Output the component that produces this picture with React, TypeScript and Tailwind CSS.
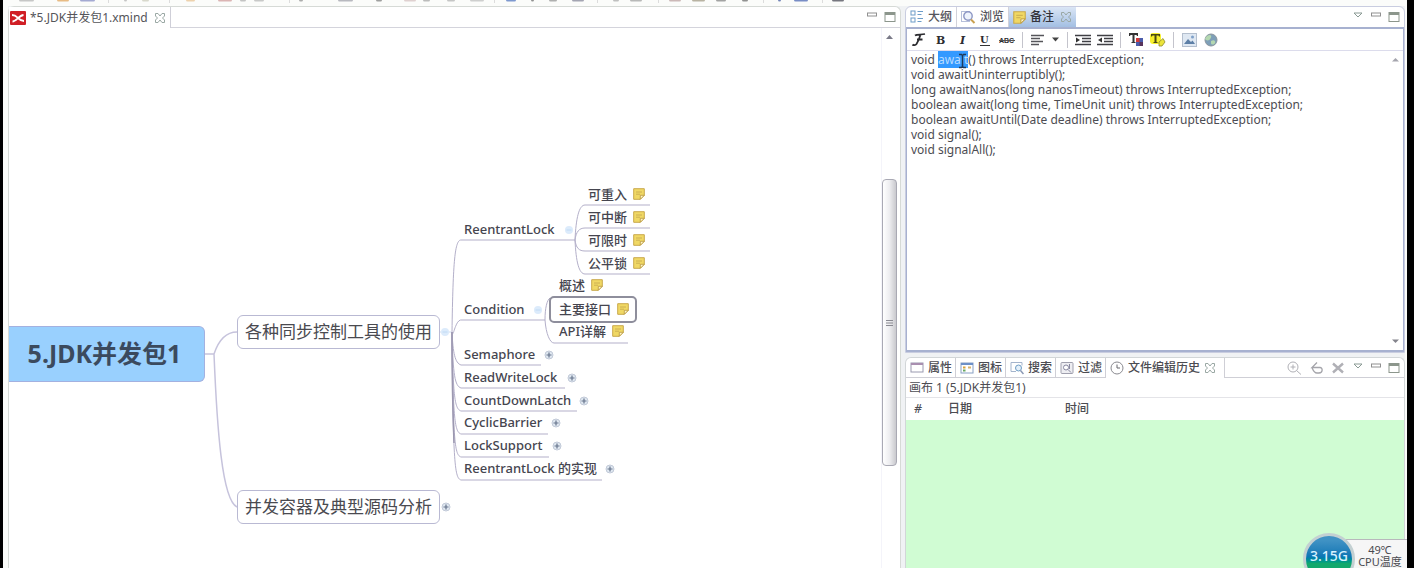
import React, { useEffect, useRef } from "react";

const FONT = "font-['Noto_Sans','Noto_Sans_CJK_SC',sans-serif]";

function NoteIcon({ size = 12 }: { size?: number }) {
  return (
    <svg width={size} height={size} viewBox="0 0 12 12" className="shrink-0" aria-hidden="true">
      <path d="M.7.7h10.6v6.6l-4 4H.7z" fill="#f0d864" stroke="#c9a94c" strokeWidth="1" />
      <path d="M11.3 7.3h-4v4z" fill="#fff6c8" stroke="#b8963c" strokeWidth=".8" />
      <path d="M3 4h6M3 6.2h4" stroke="#c8ac50" strokeWidth=".9" />
    </svg>
  );
}

function CloseIcon() {
  return (
    <svg width="12" height="12" viewBox="0 0 12 12" aria-hidden="true" fill="none" stroke="#9aa8a4">
      <path d="M1.5 1.5H4l2 2.5 2-2.5h2.5V4l-2 2 2 2v2.5H8L6 8l-2 2.5H1.500V8l2-2-2-2z" />
    </svg>
  );
}

function MinIcon() {
  return (
    <svg width="12" height="12" viewBox="0 0 12 12" aria-hidden="true">
      <rect x="1.5" y="2" width="9" height="3" fill="#fff" stroke="#909090" />
    </svg>
  );
}

function MaxIcon() {
  return (
    <svg width="12" height="12" viewBox="0 0 12 12" aria-hidden="true">
      <rect x="1" y="1.5" width="10" height="9" fill="#fff" stroke="#8c968c" />
      <path d="M1 3h10" stroke="#8c968c" strokeWidth="2" />
    </svg>
  );
}

function MenuIcon() {
  return (
    <svg width="12" height="12" viewBox="0 0 12 12" aria-hidden="true">
      <path d="M2 2h8L6 6z" fill="#fff" stroke="#8a9a94" />
    </svg>
  );
}

function WindowButtons({ menu = false }: { menu?: boolean }) {
  return (
    <div className="flex items-center gap-1.5 pr-1">
      {menu && (
        <button type="button" aria-label="视图菜单">
          <MenuIcon />
        </button>
      )}
      <button type="button" aria-label="最小化">
        <MinIcon />
      </button>
      <button type="button" aria-label="最大化">
        <MaxIcon />
      </button>
    </div>
  );
}

const stripMarks: [number, number, string][] = [
  [11, 15, "#b9b9b9"], [49, 12, "#e3ab68"], [72, 15, "#8f95c8"], [116, 3, "#b8b8b8"], [134, 7, "#d0d0c0"],
  [178, 9, "#eac79a"], [210, 14, "#d3a3a3"], [232, 6, "#b5b5b5"], [246, 10, "#bcbcbc"], [291, 4, "#999999"],
  [330, 15, "#a8a8b0"], [368, 6, "#888888"], [396, 12, "#d8c6c6"], [415, 7, "#ababab"], [439, 8, "#b8b8b8"],
  [462, 14, "#c3c3c3"], [498, 10, "#5f7fc4"], [523, 3, "#777777"], [541, 8, "#9c9c9c"], [564, 12, "#8f8fa0"],
  [605, 6, "#b0b0b0"], [622, 12, "#a8a8a8"], [661, 12, "#c0a8a8"], [684, 13, "#a8a08c"], [708, 10, "#8c8c8c"],
  [734, 6, "#777777"], [770, 3, "#5468a8"], [786, 14, "#5870b8"], [824, 12, "#555560"],
];
const stripSeparators = [100, 161, 281, 486, 589, 650, 755, 814];

function ToolbarStrip() {
  return (
    <svg className="block h-1.5 w-full" aria-hidden="true">
      {stripMarks.map(([x, w, c]) => (
        <rect key={x} x={x} y="-3" width={w} height="4.500" rx="1.5" fill={c} opacity=".8" />
      ))}
      {stripSeparators.map((x) => (
        <rect key={x} x={x} y="0" width="1" height="3" fill="#dcdcdc" />
      ))}
    </svg>
  );
}

type Topic = { x: number; y: number; text: string };

const branches: { y: number; base: number; end: number; text: string; toggle: number; open?: boolean }[] = [
  { y: 202, base: 212, end: 566, text: "ReentrantLock", toggle: 560, open: true },
  { y: 282, base: 292, end: 536, text: "Condition", toggle: 529, open: true },
  { y: 327, base: 337, end: 532, text: "Semaphore", toggle: 540 },
  { y: 350, base: 360, end: 556, text: "ReadWriteLock", toggle: 563 },
  { y: 373, base: 383, end: 568, text: "CountDownLatch", toggle: 575 },
  { y: 395, base: 406, end: 539, text: "CyclicBarrier", toggle: 547 },
  { y: 418, base: 429, end: 540, text: "LockSupport", toggle: 548 },
  { y: 441, base: 452, end: 593, text: "ReentrantLock 的实现", toggle: 601 },
];

const leaves: Topic[] = [
  { x: 579, y: 166, text: "可重入" },
  { x: 579, y: 189, text: "可中断" },
  { x: 579, y: 212, text: "可限时" },
  { x: 579, y: 235, text: "公平锁" },
  { x: 550, y: 257, text: "概述" },
  { x: 550, y: 303, text: "API详解" },
];

function Toggle({ x, y, open }: { x: number; y: number; open?: boolean }) {
  if (open) {
    return (
      <g stroke="none">
        <circle cx={x} cy={y} r="4" fill="#dcebfb" />
        <path d={`M${x - 2.5} ${y}h5`} stroke="#c0daf4" />
      </g>
    );
  }
  return (
    <g>
      <circle cx={x} cy={y} r="4" fill="#dfe7f0" stroke="#c2cad8" />
      <path d={`M${x - 2.5} ${y}h5M${x} ${y - 2.5}v5`} stroke="#66748c" strokeWidth="1.2" />
    </g>
  );
}

function MindMap() {
  return (
    <div className="relative min-w-0 flex-1 overflow-hidden">
      <svg className="absolute inset-0 h-full w-full" aria-hidden="true" fill="none" stroke="#b3afc9">
        <path d="M196 326h9C209 314 216 304 228 304M205 326C208 400 213 472 228 479" stroke="#c6c3dc" strokeWidth="1.5" />
        <path d="M430 304h12" stroke="#cfdcf0" />
        {branches.map((b) => (
          <path
            key={b.text}
            d={
              b.base < 304
                ? `M443 304C444 ${b.base + 20} 446 ${b.base} 452 ${b.base}H${b.end}`
                : `M443 304C444 ${b.base - 12} 446 ${b.base - 2} 452 ${b.base}H${b.end}`
            }
          />
        ))}
        <path d="M443 304C443 350 444 390 445 415" stroke="#9c98b0" strokeWidth="1.5" />
        <path d="M566 212C567 190 570 177 576 177H641" />
        <path d="M566 212C567 204 570 200 576 200H641" />
        <path d="M566 212C567 220 570 223 576 223H641" />
        <path d="M566 212C567 234 570 246 576 246H641" />
        <path d="M536 292C536 280 538 272 541 270M536 292C537 306 541 315 545 315H619" />
        {branches.map((b) => (
          <Toggle key={b.text} x={b.toggle} y={b.y} open={b.open} />
        ))}
        <Toggle x={436} y={304} open />
        <Toggle x={437} y={479} />
      </svg>

      <div className="absolute left-0 top-[298px] flex h-14 w-[196px] items-center justify-center rounded-r-md border border-l-0 border-[#a3b1e0] bg-[#99d0fe] pr-1 pb-0.5 text-[25px] leading-8 font-bold whitespace-nowrap text-[#3b4a5e]">
        5.JDK并发包1
      </div>
      <div className="absolute left-[228px] top-[287px] flex h-[34px] items-center whitespace-nowrap rounded-md border border-[#b9b9d3] bg-white px-[7px] text-[17px] text-[#4a4a50]">
        各种同步控制工具的使用
      </div>
      <div className="absolute left-[228px] top-[462px] flex h-[34px] items-center whitespace-nowrap rounded-md border border-[#b9b9d3] bg-white px-[7px] text-[17px] text-[#4a4a50]">
        并发容器及典型源码分析
      </div>

      {branches.map((b) => (
        <div
          key={b.text}
          className="absolute -translate-y-1/2 whitespace-nowrap pb-0.5 text-[13px] leading-4 font-medium text-[#45454f]"
          style={{ left: 455, top: b.y }}
        >
          {b.text}
        </div>
      ))}
      {leaves.map((t) => (
        <div
          key={t.text}
          className="absolute flex -translate-y-1/2 items-center gap-1.5 whitespace-nowrap text-[13px] leading-4 font-medium text-[#45454f]"
          style={{ left: t.x, top: t.y }}
        >
          {t.text}
          <NoteIcon />
        </div>
      ))}
      <div className="absolute left-[540px] top-[268px] flex h-[27px] items-center gap-1.5 whitespace-nowrap rounded-[5px] border-2 border-[#8e8e9c] bg-white pr-1.5 pb-0.5 pl-2 text-[13px] leading-4 font-medium text-[#45454f]">
        主要接口
        <NoteIcon />
      </div>
    </div>
  );
}

function Editor() {
  return (
    <section className="flex min-h-0 min-w-0 flex-col rounded-t-md border border-b-0 border-[#d6dad6] bg-white">
      <div className="flex h-[21px] shrink-0 items-stretch justify-between border-b border-[#d4d4dc]">
        <div className="-mb-px flex items-center gap-1 border-r border-[#cfcfd8] bg-white pr-1 pl-px">
          <svg width="16" height="14" viewBox="0 0 16 14" aria-hidden="true">
            <rect width="16" height="14" rx="1" fill="#d01f26" />
            <path d="M2 4c3.500 0 4 1 6 3s3 3 6 3M2.500 10.500C6 10.500 9 4.500 13.500 4" stroke="#fff" strokeWidth="1.8" fill="none" />
          </svg>
          <span className="text-[12px] leading-4 whitespace-nowrap text-[#55555a]">*5.JDK并发包1.xmind</span>
          <button type="button" aria-label="关闭" className="ml-0.5">
            <CloseIcon />
          </button>
        </div>
        <WindowButtons />
      </div>
      <div className="flex min-h-0 flex-1">
        <MindMap />
        <div className="flex w-[19px] shrink-0 flex-col items-center border-l border-[#f4f4fa] pr-1">
          <svg width="7" height="5" viewBox="0 0 7 5" className="mt-1.5 mb-[140px] shrink-0" aria-hidden="true">
            <path d="M0 5h7L3.500 1z" fill="#7a7a88" />
          </svg>
          <div className="flex h-[287px] w-[15px] shrink-0 items-center justify-center rounded-sm border border-[#a9a9b4] bg-linear-to-r from-white via-[#ededf0] to-[#c9c9ce]">
            <svg width="7" height="8" viewBox="0 0 7 8" aria-hidden="true">
              <path d="M0 1.500h7M0 4h7M0 6.500h7" stroke="#8a8a92" />
            </svg>
          </div>
        </div>
      </div>
    </section>
  );
}

function OutlineIcon() {
  return (
    <svg width="14" height="14" viewBox="0 0 14 14" fill="none" stroke="#6c9cc8" aria-hidden="true">
      <rect x="1" y="1" width="4" height="4" />
      <rect x="1" y="8" width="4" height="4" />
      <path d="M7.500 1.500h5.500M7.500 4.500h4M7.500 8.500h5.500M7.500 11.500h4" />
    </svg>
  );
}

function LensIcon() {
  return (
    <svg width="15" height="14" viewBox="0 0 15 14" fill="none" aria-hidden="true">
      <rect x=".5" y="1.5" width="8" height="10" stroke="#b6bfda" />
      <circle cx="7" cy="6" r="4.2" fill="#eef3fc" stroke="#8d97c4" strokeWidth="1.4" />
      <path d="M10 9.500l3.500 3.500" stroke="#c9a050" strokeWidth="2" />
    </svg>
  );
}

const topTab =
  "flex items-center gap-1 border-r border-[#d2d2da] px-1 text-[12px] leading-4 font-medium text-[#55555c] whitespace-nowrap";

const tools: { label: string; icon: React.ReactNode }[] = [
  {
    label: "字体",
    icon: (
      <path
        d="M4 3.500C6 2 10 3 14 2M9.500 2.800C8.500 6 7.500 9 5.500 12c-1 1.300-3 1.500-4 .5M6 7.500h5.500"
        fill="none"
        stroke="#2c2c30"
        strokeWidth="1.8"
      />
    ),
  },
  { label: "粗体", icon: <text x="3" y="12" fontFamily="DejaVu Serif, serif" fontWeight="700" fontSize="11">B</text> },
  { label: "斜体", icon: <text x="5" y="12" fontFamily="DejaVu Serif, serif" fontStyle="italic" fontWeight="700" fontSize="11">I</text> },
  {
    label: "下划线",
    icon: (
      <>
        <text x="3" y="11" fontFamily="DejaVu Serif, serif" fontWeight="700" fontSize="10">U</text>
        <path d="M3 13.500h10" stroke="#333" />
      </>
    ),
  },
  {
    label: "删除线",
    icon: (
      <>
        <text x="0" y="11" fontFamily="Liberation Sans, sans-serif" fontWeight="700" fontSize="7">ABC</text>
        <path d="M0 8.500h16" stroke="#555" />
      </>
    ),
  },
];

function NotesToolbar() {
  const sep = <span className="mx-1 h-4 w-px bg-[#c4c4cc]" />;
  const btn = "flex h-5 w-[22px] items-center justify-center";
  return (
    <div role="toolbar" aria-label="备注格式" className="flex h-[22px] shrink-0 items-center border-b border-[#dcdcec] pl-px">
      {tools.map((t) => (
        <button key={t.label} type="button" aria-label={t.label} className={btn}>
          <svg width="16" height="16" viewBox="0 0 16 16" fill="#2c2c30" aria-hidden="true">{t.icon}</svg>
        </button>
      ))}
      {sep}
      <button type="button" aria-label="对齐" className="flex h-5 w-9 items-center justify-between px-1">
        <svg width="13" height="12" viewBox="0 0 13 12" stroke="#55555a" strokeWidth="1.5" aria-hidden="true">
          <path d="M0 1.500h13M0 4.500h9M0 7.500h12M0 10.500h8" />
        </svg>
        <svg width="7" height="5" viewBox="0 0 7 5" aria-hidden="true"><path d="M0 .5h7L3.500 4.500z" fill="#444" /></svg>
      </button>
      {sep}
      <button type="button" aria-label="增加缩进" className={btn}>
        <svg width="16" height="12" viewBox="0 0 16 12" aria-hidden="true">
          <path d="M0 1.500h16M7 4.500h9M7 7.500h9M0 10.500h16" stroke="#3f3f44" strokeWidth="1.5" />
          <path d="M1 3.500v5L5 6z" fill="#333" />
        </svg>
      </button>
      <button type="button" aria-label="减少缩进" className={btn}>
        <svg width="16" height="12" viewBox="0 0 16 12" aria-hidden="true">
          <path d="M0 1.500h16M7 4.500h9M7 7.500h9M0 10.500h16" stroke="#3f3f44" strokeWidth="1.5" />
          <path d="M5 3.500v5L1 6z" fill="#333" />
        </svg>
      </button>
      {sep}
      <button type="button" aria-label="文字颜色" className={btn}>
        <svg width="16" height="16" viewBox="0 0 16 16" aria-hidden="true">
          <path d="M1 1h9v3H9L8.500 3H6.500v7h1v1h-4v-1h1V3H2.500L2 4H1z" fill="#333" />
          <rect x="8" y="6" width="7" height="8" fill="#4a5cac" />
          <rect x="8" y="6" width="3.5" height="4" fill="#d33b3b" />
          <rect x="11.5" y="10" width="3.5" height="4" fill="#58345c" />
        </svg>
      </button>
      <button type="button" aria-label="背景颜色" className={btn}>
        <svg width="16" height="16" viewBox="0 0 16 16" aria-hidden="true">
          <rect x="0" y="1" width="11" height="11" rx="3" fill="#f7f02c" />
          <path d="M1 2h9v2.500H9L8.500 3.500H6.500V10h1v1h-4v-1h1V3.500H2.500L2 4.500H1z" fill="#4a4a14" />
          <path d="M9 10l4-3.500 2 3.500-3 4H9z" fill="#ece43a" stroke="#8f8a2c" strokeWidth=".8" />
        </svg>
      </button>
      {sep}
      <button type="button" aria-label="插入图片" className={btn}>
        <svg width="15" height="14" viewBox="0 0 15 14" aria-hidden="true">
          <rect x=".5" y=".5" width="14" height="13" fill="#dfe8f2" stroke="#b4bfce" />
          <path d="M2 11l4-5 3 3 1.500-1.500L13 11z" fill="#5d7fa6" />
          <circle cx="10.5" cy="4" r="1.5" fill="#7fa0c8" />
        </svg>
      </button>
      <button type="button" aria-label="插入链接" className={btn}>
        <svg width="14" height="14" viewBox="0 0 14 14" aria-hidden="true">
          <circle cx="7" cy="7" r="6" fill="#7e9fb8" stroke="#8a959c" />
          <path d="M3 3c3-2 5-1 4 1.500S4 8 2 7 2 4 3 3zM7 8c3-2 5 0 4 2s-4 2-4 0z" fill="#b4d8b0" />
        </svg>
      </button>
    </div>
  );
}

const noteText = [
  "void await() throws InterruptedException;",
  "void awaitUninterruptibly();",
  "long awaitNanos(long nanosTimeout) throws InterruptedException;",
  "boolean await(long time, TimeUnit unit) throws InterruptedException;",
  "boolean awaitUntil(Date deadline) throws InterruptedException;",
  "void signal();",
  "void signalAll();",
].join("\n");

function NotesPanel() {
  const area = useRef<HTMLTextAreaElement>(null);
  useEffect(() => {
    area.current?.focus();
    area.current?.setSelectionRange(5, 10);
  }, []);
  return (
    <section className="flex h-[347px] shrink-0 flex-col rounded-t-md border border-[#c9cde0] bg-white">
      <div className="flex h-5 shrink-0 items-stretch justify-between">
        <div role="tablist" className="flex">
          <button type="button" role="tab" aria-selected="false" className={topTab}>
            <OutlineIcon />大纲
          </button>
          <button type="button" role="tab" aria-selected="false" className={topTab}>
            <LensIcon />浏览
          </button>
          <button
            type="button"
            role="tab"
            aria-selected="true"
            className="flex items-center gap-1 bg-linear-to-b from-[#dbe6f5] to-[#a3bfe3] px-1 text-[12px] leading-4 font-medium whitespace-nowrap text-[#33333a]"
          >
            <NoteIcon size={13} />备注<span className="ml-0.5"><CloseIcon /></span>
          </button>
        </div>
        <WindowButtons menu />
      </div>
      <div className="flex min-h-0 flex-1 flex-col border border-t-2 border-b-2 border-[#a7b1d0]">
        <NotesToolbar />
        <div className="relative flex min-h-0 flex-1">
          <textarea
            ref={area}
            aria-label="备注"
            defaultValue={noteText}
            spellCheck={false}
            wrap="off"
            className="min-w-0 flex-1 resize-none overflow-hidden bg-white pt-px pl-1 text-[12px] leading-[15px] text-[#4c4c52] outline-none selection:bg-[#3399ff] selection:text-[#b8dcff]"
          />
          <div className="flex w-4 flex-col items-center justify-between py-1.5">
            <svg width="7" height="5" viewBox="0 0 7 5" aria-hidden="true"><path d="M0 4.500h7L3.500 1z" fill="#a5a5ae" /></svg>
            <svg width="7" height="5" viewBox="0 0 7 5" aria-hidden="true"><path d="M0 .5h7L3.500 4z" fill="#84848c" /></svg>
          </div>
          <svg className="absolute left-[51px] top-0.5" width="9" height="16" viewBox="0 0 9 16" fill="none" stroke="#1d3a5c" strokeWidth="1.5" aria-hidden="true">
            <path d="M1 1.500h2.500l1 1 1-1H8M1 14.500h2.500l1-1 1 1H8M4.500 2.500v11" />
          </svg>
        </div>
      </div>
    </section>
  );
}

const smallTabs = [
  {
    label: "属性",
    icon: (
      <>
        <rect x="1" y="2" width="12" height="9" fill="#fff" stroke="#9a9ab0" />
        <path d="M1 3h12" stroke="#a98fb0" strokeWidth="2" />
      </>
    ),
  },
  {
    label: "图标",
    icon: (
      <>
        <rect x="1" y="2" width="12" height="10" fill="#fff" stroke="#88a0c4" />
        <path d="M1 3h12" stroke="#6c90c8" strokeWidth="2" />
        <rect x="3" y="5.5" width="2.5" height="2" fill="#d8a23c" />
        <rect x="3" y="8.5" width="2.5" height="2" fill="#68a860" />
        <rect x="8" y="5.5" width="3" height="2" fill="#d8b46c" />
      </>
    ),
  },
  {
    label: "搜索",
    icon: (
      <>
        <path d="M1 1.500h11v3M1 1.500v9h5" fill="none" stroke="#a4b4cc" />
        <circle cx="8.5" cy="7" r="3" fill="#e4f0fa" stroke="#6f9cc4" />
        <path d="M10.500 9.500l3 3.500" stroke="#8a98b4" strokeWidth="1.5" />
      </>
    ),
  },
  {
    label: "过滤",
    icon: (
      <>
        <rect x="1" y="1.5" width="12" height="11" rx="1" fill="#eeeef2" stroke="#a0a0ae" />
        <circle cx="6" cy="6.5" r="2.5" fill="#fff" stroke="#8888a0" />
        <path d="M8 8.500l3 3M9.500 3v5" stroke="#8888a0" />
      </>
    ),
  },
];

function HistoryPanel() {
  return (
    <section className="mt-1 flex min-h-0 flex-1 flex-col rounded-t-md border border-b-0 border-[#d2d6d8] bg-white">
      <div className="flex h-5 shrink-0 items-stretch justify-between border-b border-[#cfcfd6]">
        <div role="tablist" className="-mb-px flex">
          {smallTabs.map((t) => (
            <button
              key={t.label}
              type="button"
              role="tab"
              aria-selected="false"
              className="flex items-center gap-1 border-r border-b border-[#cfcfd6] pr-[3px] pl-1 text-[12px] leading-4 font-medium whitespace-nowrap text-[#4c4c52]"
            >
              <svg width="14" height="14" viewBox="0 0 14 14" aria-hidden="true">{t.icon}</svg>
              {t.label}
            </button>
          ))}
          <button
            type="button"
            role="tab"
            aria-selected="true"
            className="flex items-center gap-1 border-r border-[#cfcfd6] bg-white pr-2 pl-1 text-[12px] leading-4 font-medium whitespace-nowrap text-[#4c4c52]"
          >
            <svg width="14" height="14" viewBox="0 0 14 14" fill="none" stroke="#8a8a90" aria-hidden="true">
              <circle cx="7" cy="7" r="6" />
              <path d="M7 3.500V7h3" stroke="#66666c" />
            </svg>
            文件编辑历史
            <CloseIcon />
          </button>
        </div>
        <div className="flex items-center gap-2">
          <button type="button" aria-label="预览">
            <svg width="15" height="14" viewBox="0 0 15 14" fill="none" stroke="#b0b0b6" aria-hidden="true">
              <circle cx="6" cy="6" r="5" />
              <path d="M3.500 6h5M6 3.500v5M9.500 9.500l4.500 4" />
            </svg>
          </button>
          <button type="button" aria-label="恢复">
            <svg width="14" height="14" viewBox="0 0 14 14" fill="none" stroke="#a4a4aa" strokeWidth="1.3" aria-hidden="true">
              <path d="M7 1.500L2 6.500h8c3 0 3 5.500-1 5.500H7C4 12 3 9 2 6.500" />
            </svg>
          </button>
          <button type="button" aria-label="删除">
            <svg width="12" height="12" viewBox="0 0 12 12" fill="none" stroke="#b0b0b6" strokeWidth="2.4" aria-hidden="true">
              <path d="M1 1.500l10 9M11 1.500l-10 9" />
            </svg>
          </button>
          <WindowButtons menu />
        </div>
      </div>
      <div className="flex h-5 shrink-0 items-center border-b border-[#e4e4e8] px-[3px] text-[12px] leading-4 text-[#4c4c52]">
        画布 1 (5.JDK并发包1)
      </div>
      <div className="min-h-0 flex-1 bg-[#d0fcd3]">
        <table className="w-full table-fixed border-collapse bg-white text-left text-[12px] text-[#4c4c52]">
          <thead>
            <tr className="h-[22px]">
              <th scope="col" className="w-[38px] pl-2 leading-4 font-medium italic">#</th>
              <th scope="col" className="w-[117px] pl-1 leading-4 font-medium">日期</th>
              <th scope="col" className="pl-1 leading-4 font-medium">时间</th>
            </tr>
          </thead>
        </table>
      </div>
    </section>
  );
}

function SystemMonitor() {
  return (
    <div className="absolute right-0 bottom-0 flex h-[35px] w-[104px] items-end overflow-hidden">
      <div className="absolute right-0 bottom-0 flex h-[29px] w-[62px] flex-col items-center border-t border-[#b8b8bc] bg-[#f6f6f6] pt-1 pl-2 text-[11px] leading-3 whitespace-nowrap text-[#4a4a50]">
        <span>49℃</span>
        <span>CPU温度</span>
      </div>
      <div className="absolute top-0 left-0 flex size-[52px] justify-center overflow-hidden rounded-full border-[3px] border-[#c3d0d2] bg-linear-to-b from-[#3f92c4] from-10% via-[#0a76b4] via-45% to-[#12a86c] to-60% pt-2.5 text-[14px] leading-5 font-medium text-[#d8f2ff]">
        3.15G
      </div>
    </div>
  );
}

export default function App() {
  return (
    <div className={`h-screen overflow-hidden bg-black pr-[7px] pl-[3px] ${FONT}`}>
      <main className="relative flex h-full flex-col bg-[#fbfcfa] pr-0.5 pl-[5px]">
        <ToolbarStrip />
        <div className="grid min-h-0 flex-1 grid-cols-[893fr_500fr] gap-1 bg-[#f0f2f4]">
          <Editor />
          <div className="flex min-h-0 min-w-0 flex-col">
            <NotesPanel />
            <HistoryPanel />
          </div>
        </div>
        <SystemMonitor />
      </main>
    </div>
  );
}
